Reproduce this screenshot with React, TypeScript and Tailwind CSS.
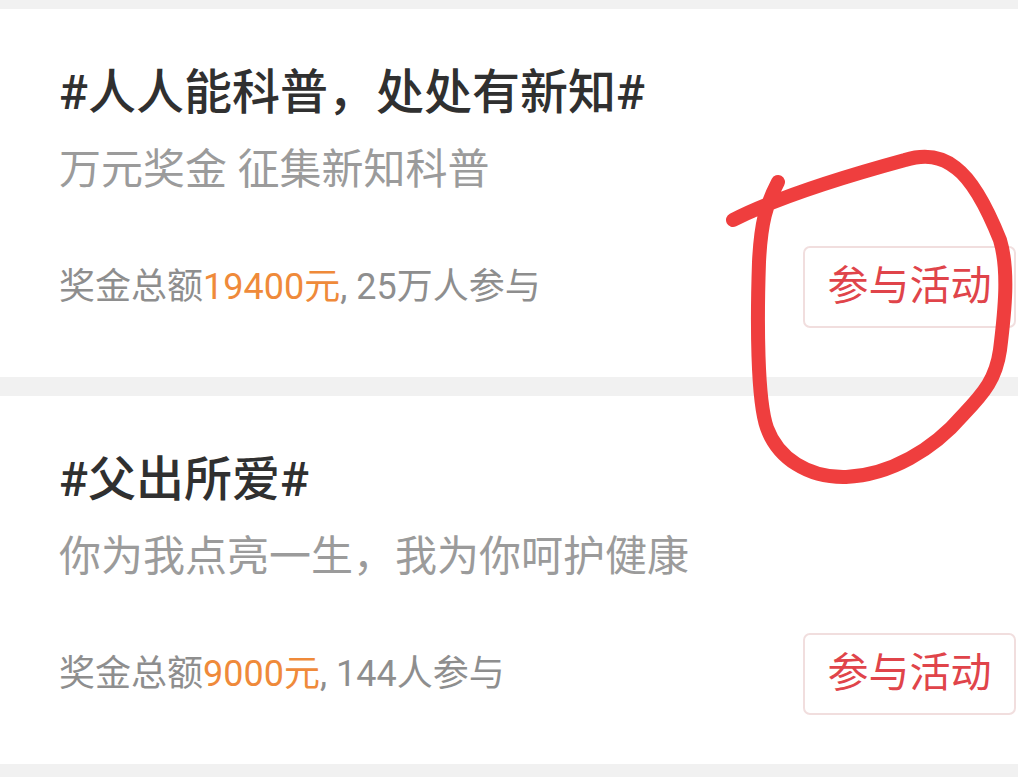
const font = { fontFamily: 'Roboto, "Noto Sans CJK SC", sans-serif' }

type Topic = {
  title: string
  desc: string
  prize: string
  people: string
}

const topics: Topic[] = [
  {
    title: '#人人能科普，处处有新知#',
    desc: '万元奖金 征集新知科普',
    prize: '19400元',
    people: ', 25万人参与',
  },
  {
    title: '#父出所爱#',
    desc: '你为我点亮一生，我为你呵护健康',
    prize: '9000元',
    people: ', 144人参与',
  },
]

function TopicCard({ topic }: { topic: Topic }) {
  return (
    <div className="bg-white h-[368px] pl-[59px] pt-[56px] flex flex-col">
      <div className="h-[56px] leading-[56px] text-[48px] font-medium text-[#303030] whitespace-nowrap">
        {topic.title}
      </div>
      <div className="mt-[24px] h-[50px] leading-[50px] text-[42px] text-[#9b9b9b] whitespace-nowrap">
        {topic.desc}
      </div>
      <div className="mt-[51px] flex items-center justify-between pr-[2px]">
        <div className="text-[36px] text-[#8e8e8e] whitespace-nowrap">
          奖金总额<span className="text-[#ef8a3a]">{topic.prize}</span>
          {topic.people}
        </div>
        <button className="w-[213px] h-[82px] rounded-[7px] border-2 border-[#f1dede] text-[41px] text-[#e0444a] flex items-center justify-center">
          参与活动
        </button>
      </div>
    </div>
  )
}

export default function App() {
  return (
    <div
      className="relative min-h-screen w-[1018px] h-[777px] bg-[#f1f1f1] pt-[9px] overflow-hidden"
      style={font}
    >
      <div className="flex flex-col gap-[19px]">
        {topics.map((t, i) => (
          <TopicCard key={i} topic={t} />
        ))}
      </div>

      {/* red hand-drawn annotation */}
      <svg
        className="absolute left-0 top-0 pointer-events-none"
        width="1018"
        height="777"
        viewBox="0 0 1018 777"
      >
        <path
          d="M 778 182 C 766 205, 761 222, 759 262 C 757 320, 757 400, 767 428 C 778 458, 808 478, 846 477 C 890 475, 933 450, 963 415 C 985 392, 996 378, 1000 350 C 1005 310, 1009 270, 1000 240 C 988 210, 972 180, 956 168 C 941 156, 925 154, 905 160 C 850 175, 780 196, 733 220"
          fill="none"
          stroke="#ef3e3e"
          strokeWidth="14"
          strokeLinecap="round"
          strokeLinejoin="round"
        />
      </svg>
    </div>
  )
}
